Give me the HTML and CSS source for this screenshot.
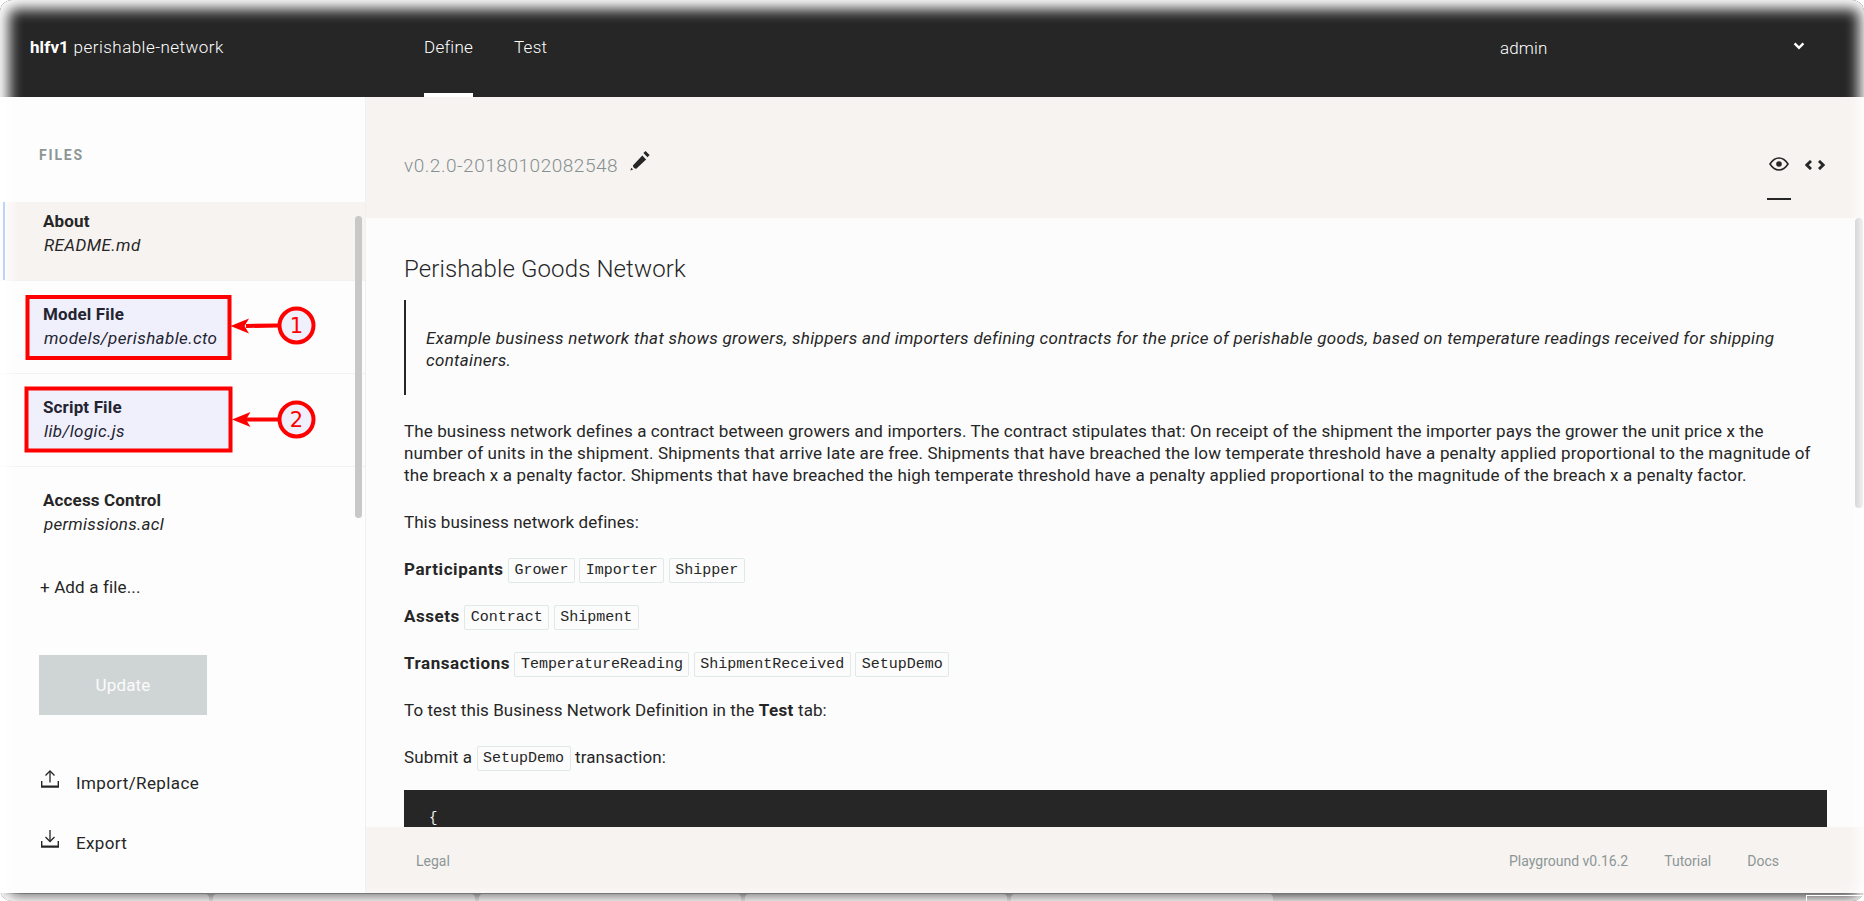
FILE: index.html
```html
<!DOCTYPE html>
<html lang="en">
<head>
<meta charset="utf-8">
<title>Playground</title>
<link rel="stylesheet" href="styles.css">
</head>
<body>
<div class="window">
  <header class="nav">
    <div class="network"><b>hlfv1</b> <span>perishable-network</span></div>
    <nav class="tabs"><a class="tab tab-active">Define</a><a class="tab">Test</a></nav>
    <div class="user"><span>admin</span>
      <svg width="12" height="8" viewBox="0 0 12 8"><path d="M1.6 1.4 6 5.8l4.4-4.4" fill="none" stroke="#fff" stroke-width="2.4"/></svg>
    </div>
  </header>
  <div class="body">
    <aside class="sidebar">
      <h2 class="files-title">FILES</h2>
      <div class="files">
        <div class="file file-active"><b>About</b><i>README.md</i></div>
        <div class="file"><b>Model File</b><i>models/perishable.cto</i></div>
        <div class="file"><b>Script File</b><i>lib/logic.js</i></div>
        <div class="file file-last"><b>Access Control</b><i>permissions.acl</i></div>
        <div class="scroll-left"></div>
      </div>
      <div class="add">+ Add a file...</div>
      <button class="update">Update</button>
      <div class="action">
        <svg width="18" height="18" viewBox="0 0 18 18" fill="none" stroke="#262626"><path d="M9 12.5V1" stroke-width="1.3"/><path d="M4.5 5.5 9 1l4.5 4.5" stroke-width="1.3"/><path d="M.7 11v5.7h16.6V11" stroke-width="1.4"/><path d="M0 16.5h18" stroke-width="2"/></svg>
        <span>Import/Replace</span>
      </div>
      <div class="action">
        <svg width="18" height="18" viewBox="0 0 18 18" fill="none" stroke="#262626"><path d="M9 0v11.5" stroke-width="1.3"/><path d="M4.5 7 9 11.5 13.5 7" stroke-width="1.3"/><path d="M.7 11v5.7h16.6V11" stroke-width="1.4"/><path d="M0 16.5h18" stroke-width="2"/></svg>
        <span>Export</span>
      </div>
    </aside>
    <main class="main">
      <div class="toolbar">
        <span class="version">v0.2.0-20180102082548</span>
        <svg class="pencil" width="20" height="20" viewBox="0 0 20 20" fill="#262626"><path d="M.3 19.6 1.4 16.800l1.700 1.700zM2.900 14.600 12.300 4.600l3.800 3.800L6.300 17.800q-3.200-.2-3.400-3.200zM13.400 2 15.500 0l4.100 4-2.100 2.200z"/></svg>
        <div class="views">
          <div class="view view-active"><svg width="20" height="14" viewBox="0 0 20 14"><path d="M1 7q3.800-6 9-6t9 6q-3.800 6-9 6T1 7z" fill="none" stroke="#262626" stroke-width="1.6"/><circle cx="10" cy="7" r="2.8" fill="#262626"/></svg></div>
          <div class="view"><svg width="20" height="10" viewBox="0 0 20 10" fill="none" stroke="#262626" stroke-width="2.8"><path d="M6 .9 1.8 5 6 9.1M14 .9 18.200 5 14 9.1"/></svg></div>
        </div>
      </div>
      <article class="content">
        <h1>Perishable Goods Network</h1>
        <blockquote>Example business network that shows growers, shippers and importers defining contracts for the price of perishable goods, based on temperature readings received for shipping<br>containers.</blockquote>
        <p class="intro"><span class="snug">The business network defines a contract between growers and importers. The contract stipulates that: On receipt of the shipment the importer pays the grower the unit price x the</span><br>number of units in the shipment. Shipments that arrive late are free. Shipments that have breached the low temperate threshold have a penalty applied proportional to the magnitude of<br>the breach x a penalty factor. Shipments that have breached the high temperate threshold have a penalty applied proportional to the magnitude of the breach x a penalty factor.</p>
        <p class="snug">This business network defines:</p>
        <p><b>Participants</b> <code>Grower</code> <code>Importer</code> <code>Shipper</code></p>
        <p><b>Assets</b> <code>Contract</code> <code>Shipment</code></p>
        <p><b>Transactions</b> <code>TemperatureReading</code> <code>ShipmentReceived</code> <code>SetupDemo</code></p>
        <p class="tight">To test this Business Network Definition in the <b>Test</b> tab:</p>
        <p>Submit a <code>SetupDemo</code> transaction:</p>
        <pre>{</pre>
        <div class="scroll-right"></div>
      </article>
      <footer class="footer"><span>Legal</span><div class="links"><span>Playground v0.16.2</span><span>Tutorial</span><span>Docs</span></div></footer>
    </main>
  </div>
  <div class="strip"><i class="strip-first"></i><i></i><i></i><i></i><i></i><div class="corner"></div></div>
  <div class="fade"></div>
  <div class="active-mark"></div>
  <svg class="notes" width="330" height="180" viewBox="0 0 330 180" fill="none" stroke="#f00" stroke-width="4">
    <rect x="7.5" y="7" width="202" height="61" fill="rgba(0,0,255,.05)"/>
    <rect x="6.5" y="98.5" width="204" height="62" fill="rgba(0,0,255,.05)"/>
    <path d="M226 36 258 35.500M226 129.500H258"/>
    <path d="m210.500 36 18.500-7.500-4.500 7.500 4.500 7.500zM212 129.500l18.500-7.500-4.500 7.500 4.500 7.500z" fill="#f00" stroke="none"/>
    <circle cx="276.500" cy="35.500" r="17" fill="#f0effc"/>
    <circle cx="276.500" cy="129.500" r="17" fill="#f0effc"/>
    <text class="num" x="276.500" y="43">1</text>
    <text class="num" x="276.500" y="137">2</text>
  </svg>
</div>
</body>
</html>
```
FILE: styles.css
```css
* { box-sizing: border-box; }
html { background: #fff; }
body { margin: 0; background: #fff; color: #262626; font: 17px/22px Roboto, "Liberation Sans", sans-serif; letter-spacing: .14px; }
.window { position: relative; width: 1864px; height: 901px; overflow: hidden; display: flex; flex-direction: column; white-space: nowrap; }
.nav { flex: none; height: 97px; background: #262626; color: #fff; display: flex; padding-left: 30px; font-weight: 300; }
.network { width: 394px; padding-top: 36px; letter-spacing: .47px; }
.network b { letter-spacing: .1px; font-weight: 700; }
.tabs { display: flex; gap: 41px; flex: 1; }
.tab { padding-top: 36px; height: 97px; letter-spacing: .25px; }
.tab-active { border-bottom: 4px solid #fff; }
.user { width: 364px; display: flex; justify-content: space-between; padding: 37px 59px 0 0; }
.user svg { margin-top: 5px; }
.body { flex: none; height: 796px; display: flex; }
.sidebar { width: 366px; border-right: 1px solid #eef0f2; background: #fdfdfd; display: flex; flex-direction: column; }
.files-title { margin: 0; height: 105px; padding: 47px 0 0 39px; font-size: 14px; letter-spacing: 1.8px; color: #8c9696; }
.files { position: relative; display: flex; flex-direction: column; }
.file { height: 93px; padding: 22px 0 0 43px; border-bottom: 1px solid #f0f0f5; display: flex; flex-direction: column; gap: 2px; }
.file b { letter-spacing: .15px; }
.file i { padding-left: 1px; letter-spacing: .4px; }
.file-active { height: 79px; padding-top: 8px; background: #f7f3f1; }
.file-last { height: 78px; border: 0; }
.file-last i { letter-spacing: .26px; }
.add { margin: 31px 0 0 40px; }
.update { margin: 57px 0 0 39px; width: 168px; height: 60px; border: 0; background: #cfd5d5; color: #fbfbfb; font: inherit; letter-spacing: .17px; }
.action { display: flex; align-items: flex-start; gap: 17px; margin: 56px 0 0 41px; height: 22px; letter-spacing: .37px; }
.action span { padding-top: 1px; }
.action svg { margin-top: -1px; }
.action + .action { margin-top: 38px; }
.scroll-left { position: absolute; right: 3px; top: 14px; width: 7px; height: 302px; border-radius: 4px; background: #c8c8c8; }
.main { flex: 1; display: flex; flex-direction: column; }
.toolbar { flex: none; height: 121px; background: #f7f3f1; display: flex; padding: 0 37px 0 38px; }
.version { padding-top: 58px; font-size: 19px; color: #859090; letter-spacing: .54px; font-weight: 300; }
.pencil { margin: 54px auto 0 12px; }
.views { display: flex; gap: 12px; }
.view { width: 24px; height: 103px; display: flex; justify-content: center; align-items: center; padding-top: 33px; }
.view-active { border-bottom: 2px solid #262626; }
.content { position: relative; flex: none; height: 609px; padding: 39px 37px 0 38px; background: #fcfcfc; overflow: hidden; }
h1 { margin: 0 0 19px; font: 300 24px/24px Roboto, sans-serif; letter-spacing: .12px; }
blockquote { margin: 0 0 25px; height: 95px; border-left: 2px solid #262626; padding: 27px 0 0 20px; font-style: italic; letter-spacing: .31px; }
p { height: 22px; margin: 0 0 25px; }
p b { letter-spacing: .56px; }
.intro { height: 66px; letter-spacing: .157px; }
.snug { letter-spacing: .115px; }
p.snug { letter-spacing: .04px; }
.tight { letter-spacing: .06px; }
.tight b { letter-spacing: .4px; }
code { font: 15px/1 "Liberation Mono", monospace; letter-spacing: 0; border: 1px solid #dfe9e7; border-radius: 2px; padding: 3px 5.5px; position: relative; top: -1px; }
pre { margin: -3px 0 0; height: 120px; background: #262626; color: #f4f4f4; padding: 18px 25px; font: 14px/20px "Liberation Mono", monospace; }
.scroll-right { position: absolute; right: 1px; top: 0; width: 8px; height: 290px; border-radius: 4px; background: #c8c8c8; }
.footer { height: 66px; background: #f7f3f1; display: flex; justify-content: space-between; padding: 23px 85px 0 50px; font-size: 14px; color: #8c9696; letter-spacing: 0; }
.links { display: flex; gap: 36px; }
.strip { flex: none; height: 8px; background: #2c2c2c; display: flex; padding: 1px 0 0 6px; gap: 4px; }
.strip i { width: 262px; background: #686868; border-radius: 4px 4px 0 0; }
.strip .strip-first { width: 203px; }
.corner { margin: 1px 0 0 auto; width: 58px; border: solid #fff; border-width: 1px 0 0 1px; }
/* Softens the window edges to white; the outer shadow covers the area past the rounded corners. */
.fade { position: absolute; inset: 0; border-radius: 12px; box-shadow: inset 2px 2px 14px 7px #fff, 0 0 0 12px #fff; pointer-events: none; }
.active-mark { position: absolute; left: 3px; top: 202px; width: 2px; height: 78px; background: #bcd3fa; }
.notes { position: absolute; left: 20px; top: 290px; }
.num { font: 21px "DejaVu Sans", sans-serif; letter-spacing: 0; fill: #f00; stroke: none; text-anchor: middle; }
```
